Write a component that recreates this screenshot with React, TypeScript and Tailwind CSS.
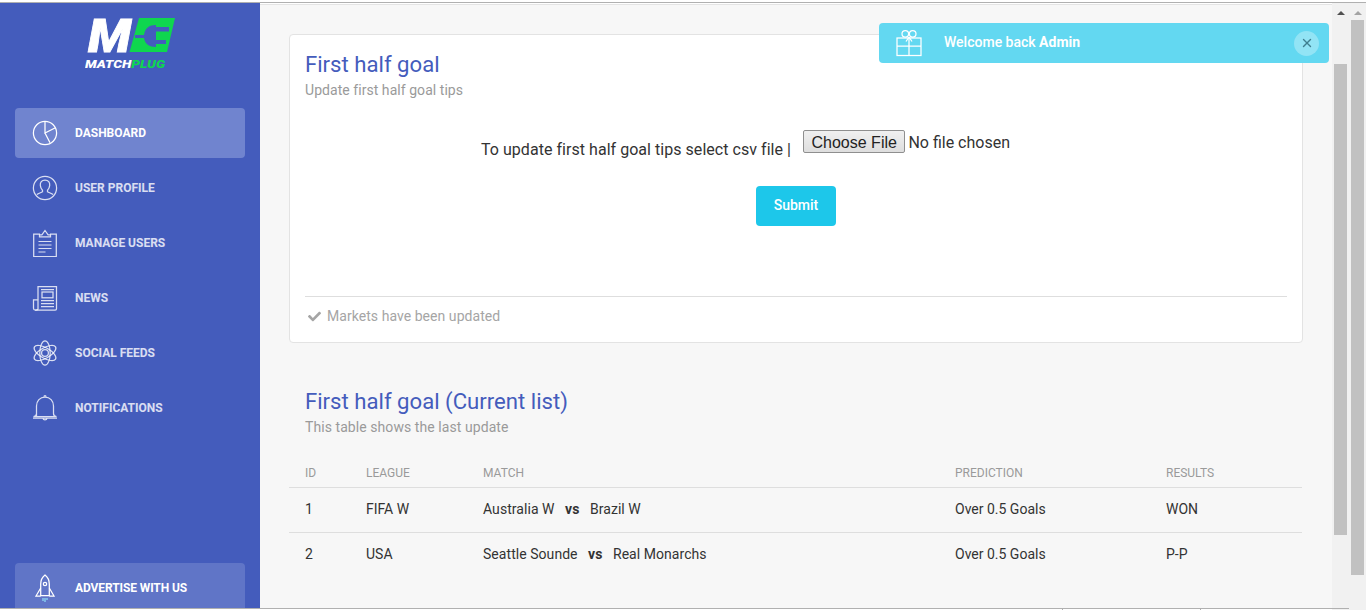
import { FaCheck } from "react-icons/fa";
import { X } from "lucide-react";
import type { ReactNode } from "react";

const Ico = ({ children, cls = "h-[28px] w-[28px]" }: { children: ReactNode; cls?: string }) => (
  <svg viewBox="0 0 28 28" fill="none" stroke="currentColor" strokeWidth="1.25" className={cls}>
    {children}
  </svg>
);

const PieIcon = () => (
  <Ico>
    <circle cx="14" cy="14" r="11.6" />
    <path d="M14 2.4V14L24.4 8.8M14 14l5 9.800" />
  </Ico>
);
const UserIcon = () => (
  <Ico>
    <circle cx="14" cy="14" r="11.6" />
    <path d="M14 6c-3.400 0-5 2.600-4.700 5.400.2 2.200 1.100 3.800 2.200 4.800v1.600c-1.600.9-4 1.400-5.600 2.700M14 6c3.400 0 5 2.600 4.700 5.400-.2 2.200-1.100 3.800-2.200 4.800v1.600c1.600.9 4 1.400 5.600 2.700" />
  </Ico>
);
const ClipIcon = () => (
  <Ico>
    <path d="M9 5H2.700v22.500h22.600V5H19" />
    <path d="M8.500 7.800h11V5.800h-2.400L14 1.500l-3.100 4.300H8.500z" />
    <path d="M7.500 12.500h13M7.500 16h13M7.500 19.500h13M7.500 23h7" strokeWidth="1.200" />
  </Ico>
);
const NewsIcon = () => (
  <Ico>
    <path d="M7 15.500V2.500h18.500v22.200a1.300 1.300 0 0 1-1.300 1.300H4.200" />
    <path d="M7 25V15.800H2.500v8.400c0 1 .8 1.800 1.800 1.800s2.700-.2 2.700-1z" />
    <path d="M10 5.500h13M10 16.500h13M10 19.500h13M10 22.500h13" />
    <rect x="11" y="8" width="11" height="5.800" />
  </Ico>
);
const AtomIcon = () => (
  <Ico>
    <circle cx="14" cy="14" r="3.400" />
    <ellipse cx="14" cy="14" rx="5.200" ry="12.200" />
    <ellipse cx="14" cy="14" rx="5.200" ry="12.200" transform="rotate(60 14 14)" />
    <ellipse cx="14" cy="14" rx="5.200" ry="12.200" transform="rotate(-60 14 14)" />
  </Ico>
);
const BellIcon = () => (
  <Ico>
    <path d="M5.500 22.500V12c0-5 3.500-9 8.500-9s8.500 4 8.500 9v7.500c0 1.500 1.500 3 3 3.200H2.500c1.500-.2 3-1.500 3-3.200" />
    <path d="M2 24h24M12 24.500c.3 1.800 3.700 1.800 4 0M13 2.800c0-1.500 2-1.500 2 0" />
  </Ico>
);
const RocketIcon = () => (
  <Ico>
    <path d="M14 1c-3.200 2.500-4.300 6-4.300 9v11.500h8.600V10c0-3-1.100-6.500-4.300-9z" />
    <circle cx="14" cy="10" r="1.700" />
    <path d="M9.700 14 5 22h4.700M18.300 14 23 22h-4.700" />
    <path d="M12 24v3M14 24v4M16 24v2" stroke="#8fdcf5" />
  </Ico>
);
const GiftIcon = () => (
  <Ico>
    <rect x="2" y="9" width="24" height="17.500" />
    <path d="M2 17h24M14 9v17.500" />
    <circle cx="10.300" cy="4.800" r="3.300" />
    <circle cx="17.700" cy="4.800" r="3.300" />
    <path d="M14 8 11 12.500M14 8l3 4.500" />
  </Ico>
);

const nav = [
  { label: "Dashboard", Icon: PieIcon, active: true },
  { label: "User Profile", Icon: UserIcon },
  { label: "Manage Users", Icon: ClipIcon },
  { label: "News", Icon: NewsIcon },
  { label: "Social Feeds", Icon: AtomIcon },
  { label: "Notifications", Icon: BellIcon },
];

const rows = [
  { id: "1", league: "FIFA W", a: "Australia W", b: "Brazil W", pred: "Over 0.5 Goals", res: "WON" },
  { id: "2", league: "USA", a: "Seattle Sounde", b: "Real Monarchs", pred: "Over 0.5 Goals", res: "P-P" },
];

const Logo = () => (
  <svg viewBox="0 0 92 60" className="h-[60px] w-[92px]">
    <polygon points="54,5 90,5 82,39 44.500,39" fill="#0fd64f" />
    <path
      d="M50 22h9C60 15 64 12 71 12v2h13v4.500H71V27h10v4H71v3C64 34 60 31 59 25h-9z"
      fill="#445cbc"
    />
    <text
      x="3"
      y="39"
      fontFamily="Roboto"
      fontWeight="900"
      fontStyle="italic"
      fontSize="47"
      fill="#fff"
      stroke="#fff"
      strokeWidth="0.8"
      textLength="43"
      lengthAdjust="spacingAndGlyphs"
    >
      M
    </text>
    <text
      x="0"
      y="55"
      fontFamily="Roboto"
      fontWeight="900"
      fontStyle="italic"
      fontSize="11.500"
      fill="#fff"
      textLength="80"
      lengthAdjust="spacingAndGlyphs"
    >
      MATCH
      <tspan fill="#0fd64f">PLUG</tspan>
    </text>
  </svg>
);

export default function App() {
  return (
    <div className="flex h-[610px] w-[1366px] flex-col overflow-hidden bg-white font-['Roboto',sans-serif] text-[#333]">
      <div className="h-[2px] shrink-0 bg-white" />
      <div className="h-[1px] shrink-0 bg-[#b0b0b0]" />
      <div className="flex min-h-0 flex-1">
        <aside className="flex h-[605px] w-[260px] shrink-0 flex-col overflow-hidden bg-[#445cbc] px-[15px]">
          <div className="h-[105px] shrink-0 pl-[70px] pt-[10px]">
            <Logo />
          </div>
          <nav className="flex flex-col gap-[5px]">
            {nav.map(({ label, Icon, active }) => (
              <a
                key={label}
                className={`flex h-[50px] items-center gap-[16px] rounded-[4px] pl-[16px] text-[12px] font-bold uppercase ${
                  active ? "bg-[#7084cf] text-white" : "text-white/80"
                }`}
              >
                <Icon />
                <span>{label}</span>
              </a>
            ))}
          </nav>
          <a className="mt-auto flex h-[50px] shrink-0 translate-y-[5px] items-center gap-[16px] rounded-[4px] bg-[#6075c7] pl-[16px] text-[12px] font-bold uppercase tracking-[-0.1px] text-white">
            <RocketIcon />
            <span>Advertise with us</span>
          </a>
        </aside>

        <main className="relative h-[605px] min-w-0 flex-1 overflow-hidden bg-[#f7f7f7] px-[29px] pt-[31px] shadow-[inset_0_1px_0_#fff,inset_0_2px_0_#e4e4e4]">
          <section className="h-[309px] rounded-[4px] border border-[#e3e3e3] bg-white px-[15px]">
            <h2 className="pt-[15px] text-[22.15px] leading-[28px] text-[#445cbc]">First half goal</h2>
            <p className="mt-[2px] text-[14px] leading-[20px] tracking-[0.05px] text-[#9a9a9a]">Update first half goal tips</p>
            <div className="mt-[30px] flex justify-center">
              <span className="mt-[10px] text-[16px] leading-[20px] tracking-[0.04px]">To update first half goal tips select csv file |</span>
              <input
                type="file"
                className="ml-[12px] h-[23px] w-[308px] text-[16px] leading-[23px] file:mr-[3px] file:h-[23px] file:rounded-[2px] file:border file:border-solid file:border-[#8f8f8f] file:bg-linear-to-b file:from-[#f0f0f0] file:to-[#dedede] file:px-[7.5px] file:font-['Liberation_Sans',sans-serif] file:text-[16px] file:text-[#222]"
              />
            </div>
            <div className="mt-[26px] flex justify-center">
              <button className="h-[40px] w-[80px] rounded-[4px] bg-[#1dc7ea] text-[14px] font-medium text-white">
                <span className="relative -top-[1px]">Submit</span>
              </button>
            </div>
            <div className="mt-[70px] flex h-[40px] items-center gap-[6px] border-t border-[#dedede] pl-[3px] text-[14px] tracking-[0.05px] text-[#a5a5a5]">
              <FaCheck className="h-[13px] w-[13px]" />
              <span>Markets have been updated</span>
            </div>
          </section>

          <section className="mt-[44px]">
            <h2 className="pl-[16px] text-[22.15px] leading-[28px] text-[#445cbc]">First half goal (Current list)</h2>
            <p className="mt-[2px] pl-[16px] text-[14px] leading-[20px] tracking-[0.07px] text-[#9a9a9a]">This table shows the last update</p>
            <table className="mt-[16px] w-[1013px] table-fixed text-left text-[14px]">
              <colgroup>
                <col className="w-[77px]" />
                <col className="w-[117px]" />
                <col className="w-[472px]" />
                <col className="w-[211px]" />
                <col />
              </colgroup>
              <thead>
                <tr className="h-[34px] border-b border-[#dedede] text-[12px] uppercase text-[#9a9a9a]">
                  <th className="pl-[16px] pt-[6px] font-normal">ID</th>
                  <th className="pt-[6px] font-normal">League</th>
                  <th className="pt-[6px] font-normal">Match</th>
                  <th className="pt-[6px] font-normal">Prediction</th>
                  <th className="pt-[6px] font-normal">Results</th>
                </tr>
              </thead>
              <tbody>
                {rows.map((r, i) => (
                  <tr key={r.id} className={`h-[45px] ${i === 0 ? "border-b border-[#dedede]" : ""}`}>
                    <td className="pl-[16px]">{r.id}</td>
                    <td>{r.league}</td>
                    <td className="tracking-[0.05px]">
                      {r.a}
                      <b className="mx-[10.5px] font-bold">vs</b>
                      {r.b}
                    </td>
                    <td>{r.pred}</td>
                    <td>{r.res}</td>
                  </tr>
                ))}
              </tbody>
            </table>
          </section>

          <div className="absolute right-[3px] top-[20px] flex h-[40px] w-[450px] items-center rounded-[4px] bg-[#63d8f1] pl-[16px] pr-[10px] text-[14px] font-medium text-white">
            <GiftIcon />
            <span className="ml-[21px] flex-1 pb-[2px]">
              Welcome back <b className="font-bold">Admin</b>
            </span>
            <span className="flex h-[25px] w-[25px] items-center justify-center rounded-full bg-white/30 text-[#3f7f90]">
              <X size={14} strokeWidth={2.4} />
            </span>
          </div>
        </main>

        <div className="flex h-[607px] w-[34px] shrink-0 bg-[#f1f1f1]">
          <div className="flex w-[17px] flex-col items-center">
            <span className="mt-[8px] h-0 w-0 border-x-[4px] border-b-[4px] border-x-transparent border-b-[#505050]" />
            <span className="mt-[49px] h-[471px] w-[13px] bg-[#c1c1c1]" />
          </div>
          <div className="flex w-[17px] flex-col items-center">
            <span className="mt-[8px] h-0 w-0 border-x-[4px] border-b-[4px] border-x-transparent border-b-[#a3a3a3]" />
            <span className="mt-[5px] h-[555px] w-[13px] bg-[#c1c1c1]" />
          </div>
        </div>
      </div>
      <div className="h-[1px] w-[1349px] shrink-0 bg-[#b0b0b0]" />
      <div className="flex h-[1px] w-[1332px] shrink-0 bg-white pl-[1062px]">
        <span className="h-[1px] w-[1px] bg-[#b0b0b0]" />
        <span className="ml-[137px] h-[1px] w-[1px] bg-[#b0b0b0]" />
      </div>
    </div>
  );
}
